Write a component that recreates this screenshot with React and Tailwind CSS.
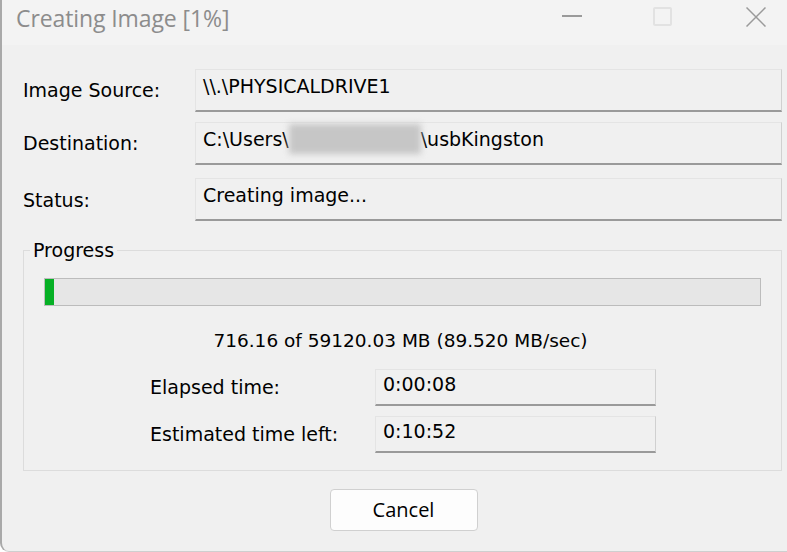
import React from "react";

const body = { fontFamily: '"DejaVu Sans", sans-serif' };

function ValueBox({ children, className = "" }) {
  return (
    <div
      className={
        "border-t border-l border-t-[#e4e4e4] border-l-[#e4e4e4] border-r border-r-[#d0d0d0] border-b-2 border-b-[#9a9a9a] bg-[#f0f0f0] pl-[7px] pt-[3px] text-[19px] leading-[26px] text-black whitespace-nowrap " +
        className
      }
    >
      {children}
    </div>
  );
}

export default function App() {
  return (
    <div className="w-[787px] h-[552px] bg-white">
      <div className="w-[787px] h-[552px] bg-[#f0f0f0] border-l-2 border-b border-l-[#a9a9a9] border-b-[#cfcfcf] rounded-bl-[9px] overflow-hidden flex flex-col" style={body}>
        {/* Title bar */}
        <div className="h-[45px] bg-[#f3f3f3] flex items-start shrink-0">
          <div className="pl-[14px] pt-[2px] text-[23px] leading-[32px] text-[#8c8c8c] flex-1" style={{ fontFamily: '"Open Sans", sans-serif', letterSpacing: "-0.1px" }}>
            Creating Image [1%]
          </div>
          <div className="flex items-start pr-[21px]">
            <div className="w-[20px] h-[2px] bg-[#9a9a9a] mt-[15px]" />
            <div className="w-[19px] h-[19px] border-2 border-[#e2e2e2] rounded-[2px] mt-[7px] ml-[71px]" />
            <svg width="20" height="20" viewBox="0 0 20 20" className="mt-[7px] ml-[74px]">
              <path d="M0.5 0.5 L19.5 19.5 M19.5 0.5 L0.5 19.5" stroke="#9a9a9a" strokeWidth="1.5" fill="none" />
            </svg>
          </div>
        </div>

        {/* Body */}
        <div className="flex-1 flex flex-col pl-[21px] pr-[5px]">
          <div className="flex items-center mt-[24px] h-[43px]">
            <div className="w-[172px] text-[19px] text-black">Image Source:</div>
            <ValueBox className="flex-1 h-[43px]">\\.\PHYSICALDRIVE1</ValueBox>
          </div>
          <div className="flex items-center mt-[10px] h-[43px]">
            <div className="w-[172px] text-[19px] text-black">Destination:</div>
            <ValueBox className="flex-1 h-[43px] flex items-start">
              <span>C:\Users\</span>
              <span className="inline-block w-[132px] h-[30px] mt-[-2px] bg-[#c6c6c6] blur-[3px]" />
              <span>\usbKingston</span>
            </ValueBox>
          </div>
          <div className="flex items-center mt-[13px] h-[43px]">
            <div className="w-[172px] text-[19px] text-black pt-[2px]">Status:</div>
            <ValueBox className="flex-1 h-[43px]">Creating image...</ValueBox>
          </div>

          {/* Progress group */}
          <div className="relative mt-[29px] h-[221px] border border-[#dcdcdc]">
            <div className="absolute left-[6px] top-[-13px] bg-[#f0f0f0] px-[3px] text-[19px] leading-[24px] text-black">Progress</div>
            <div className="mt-[27px] ml-[20px] mr-[20px] h-[28px] bg-[#e6e6e6] border border-[#bcbcbc] flex">
              <div className="w-[9px] h-full bg-[#06b025]" />
            </div>
            <div className="mt-[22px] text-center text-[18.5px] leading-[26px] text-black pr-[4px]">
              716.16 of 59120.03 MB (89.520 MB/sec)
            </div>
            <div className="flex items-center mt-[15px] ml-[126px]">
              <div className="w-[225px] text-[19px] text-black">Elapsed time:</div>
              <ValueBox className="w-[281px] h-[37px] !pt-[1px]">0:00:08</ValueBox>
            </div>
            <div className="flex items-center mt-[10px] ml-[126px]">
              <div className="w-[225px] text-[19px] text-black">Estimated time left:</div>
              <ValueBox className="w-[281px] h-[37px] !pt-[1px]">0:10:52</ValueBox>
            </div>
          </div>

          <div className="flex justify-center mt-[18px] ml-[2px]">
            <button className="w-[148px] h-[42px] bg-[#fdfdfd] border border-[#d0d0d0] rounded-[4px] text-[20px] text-black" style={{ fontFamily: '"Open Sans", sans-serif' }}>
              Cancel
            </button>
          </div>
        </div>
      </div>
    </div>
  );
}
